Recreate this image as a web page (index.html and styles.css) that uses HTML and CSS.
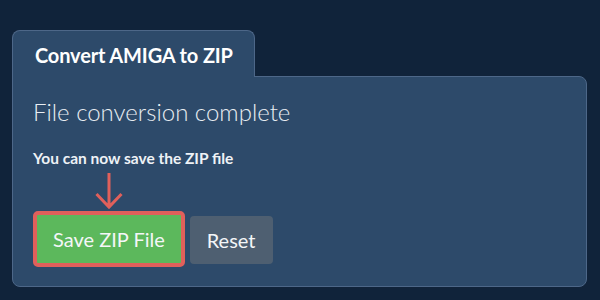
FILE: index.html
```html
<!DOCTYPE html>
<html lang="en">
  <head>
    <meta charset="UTF-8" />
    <meta name="viewport" content="width=device-width, initial-scale=1.0" />
    <title>Convert AMIGA to ZIP</title>
    <link rel="stylesheet" href="styles.css">
  </head>
  <body>
    <div class="converter">
      <div class="tab">Convert AMIGA to ZIP</div>

      <div class="panel">
        <h2>File conversion complete</h2>
        <p class="hint">You can now save the ZIP file</p>

        <div class="arrow">
          <svg width="28" height="38" viewBox="0 0 28 38">
            <path d="M14 1 V35 M1.5 22 L14 35 L26.5 22" fill="none" stroke="#e0605b" stroke-width="3" />
          </svg>
        </div>

        <div class="actions">
          <button class="btn btn-save">Save ZIP File</button>
          <button class="btn btn-reset">Reset</button>
        </div>
      </div>
    </div>
  </body>
</html>
```

FILE: styles.css
```css
body {
  font-family: Lato, "Open Sans", sans-serif;
  margin: 0;
  padding: 30px 13px 14px 12px;
  background-color: #10233a;
  color: #fff;
}

.converter {
  display: flex;
  flex-direction: column;
  align-items: flex-start;
}

.tab {
  position: relative; /* sits over the panel's top border */
  z-index: 1;
  padding: 12px 21px 10px 22px;
  margin-bottom: -1px;
  font-size: 20px;
  font-weight: 700;
  line-height: 24px;
  letter-spacing: -0.15px;
  background-color: #2d4a6a;
  border: 1px solid #4d6788;
  border-bottom: none;
  border-radius: 8px 8px 0 0;
}

.panel {
  align-self: stretch;
  padding: 20px 20px 19px 20px;
  background-color: #2d4a6a;
  border: 1px solid #4d6788;
  border-radius: 0 8px 8px 8px;
}

.panel h2 {
  margin: 0;
  font-size: 24px;
  font-weight: 300;
  line-height: 29px;
  color: #e8edf2;
}

.hint {
  margin: 23px 0 0 0;
  font-size: 15.5px;
  font-weight: 700;
  line-height: 18px;
  color: #eef2f6;
}

.arrow {
  width: 151px;
  display: flex;
  justify-content: center;
  margin-top: 5px;
  margin-bottom: 1px;
}

.arrow svg {
  display: block;
}

.actions {
  display: flex;
  align-items: center;
}

.btn {
  font-family: Lato, "Open Sans", sans-serif;
  font-size: 20px;
  line-height: 24px;
  color: #f4f6f8;
  border: none;
  border-radius: 4px;
  cursor: pointer;
}

.btn-save {
  padding: 12px 16px;
  background-color: #5cb85c;
  border: 4px solid #e0605b;
  border-radius: 5px;
}

.btn-reset {
  margin-left: 5px;
  margin-top: 1px;
  padding: 12px 17px;
  background-color: #4e5f71;
}
```
